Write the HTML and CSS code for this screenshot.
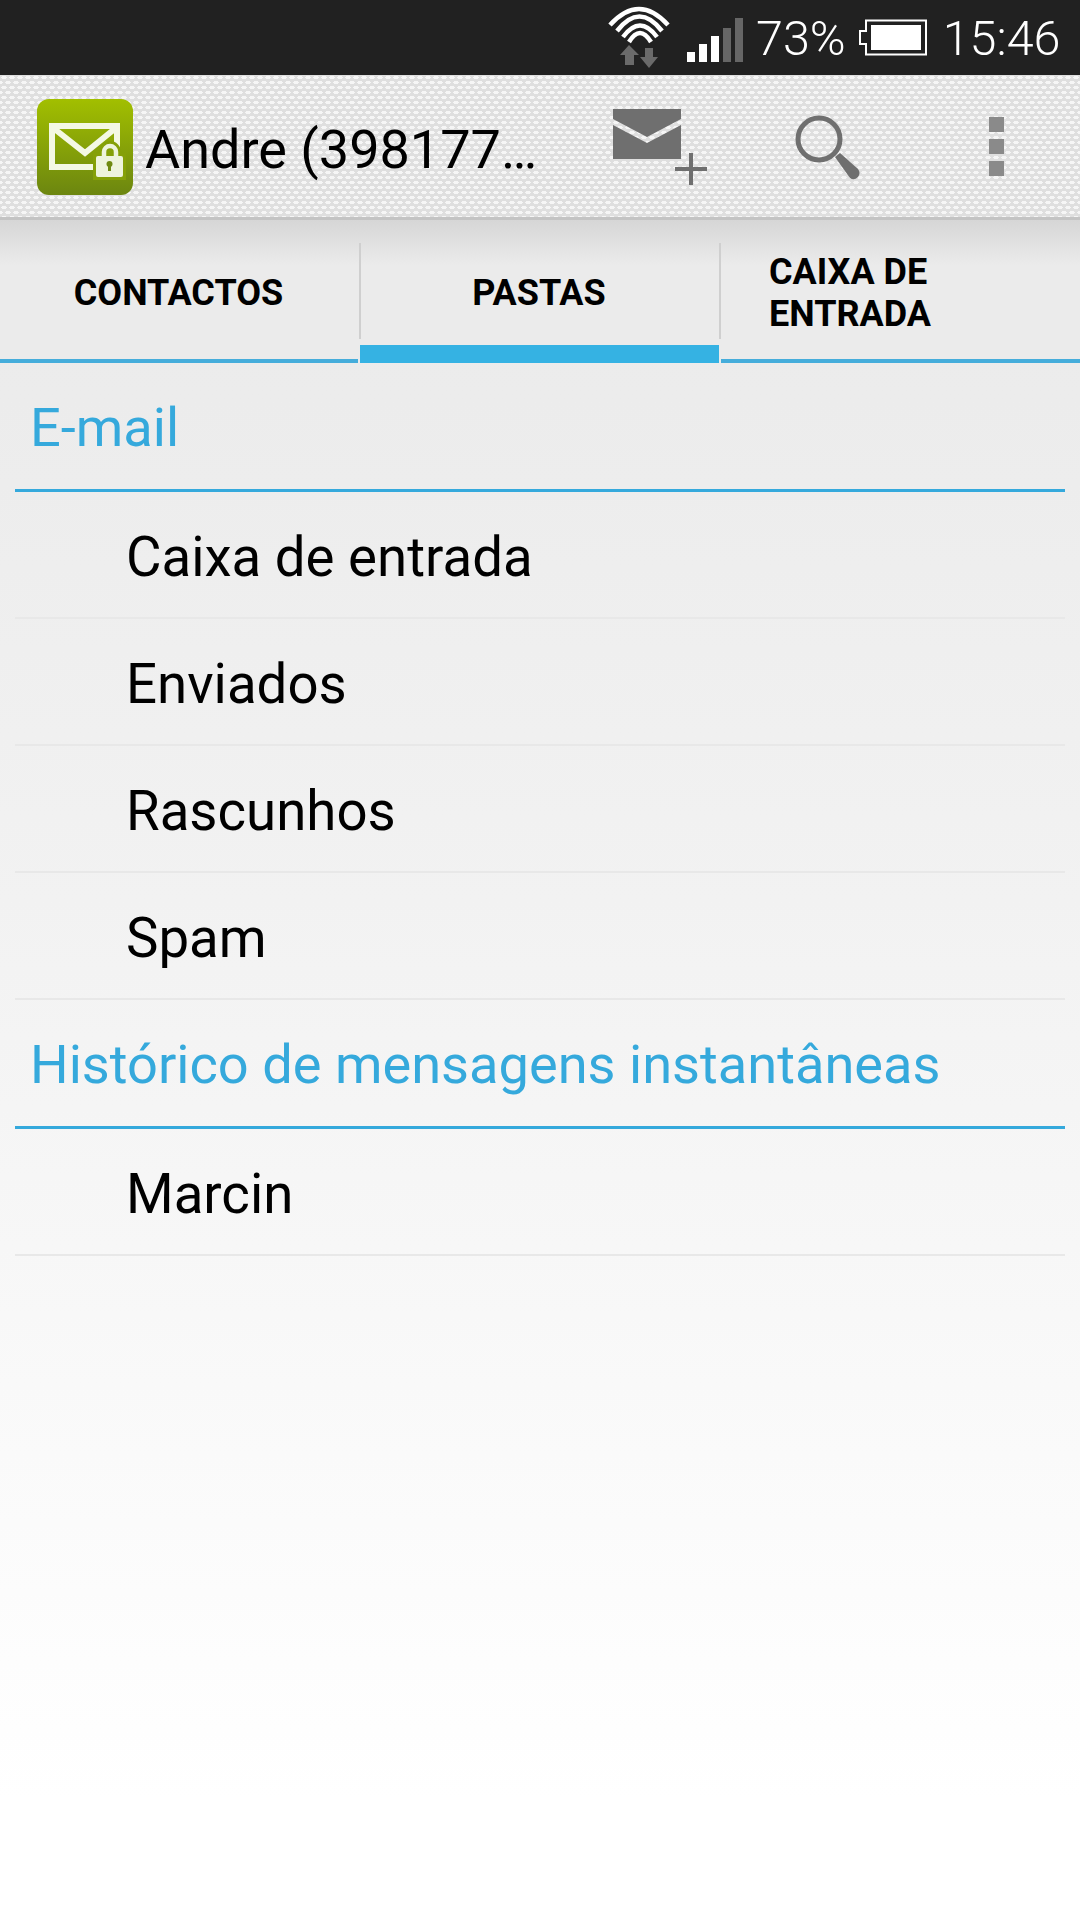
FILE: index.html
```html
<!doctype html>
<html lang="pt">
  <head>
    <meta charset="utf-8" />
    <title>Pastas</title>
    <link rel="stylesheet" href="styles.css">
  </head>
  <body>
    <div class="screen">
      <div class="statusbar">
        <svg class="st-wifi" width="70" height="72" viewBox="0 0 70 72">
          <g fill="none" stroke="#fff" stroke-width="4.5">
            <path d="M10 25 Q39 -7 68 25" />
            <path d="M17 31 Q39.5 2 62 31" />
            <path d="M23 37 Q40 14 57 37" />
            <path d="M29 42 Q40 24 51 42" />
          </g>
          <path d="M29 45 L39 55 H34 V65 H25 V55 H20 Z" fill="#6a6a6a" />
          <path d="M45 48 H53 V57 H58 L49 68 L40 57 H45 Z" fill="#6a6a6a" />
        </svg>
        <svg class="st-signal" width="56" height="44" viewBox="0 0 56 44">
          <rect x="0" y="34" width="8" height="10" fill="#fff" />
          <rect x="12" y="26" width="8" height="18" fill="#fff" />
          <rect x="24" y="18" width="8" height="26" fill="#fff" />
          <rect x="36" y="10" width="8" height="34" fill="#666" />
          <rect x="48" y="0" width="8" height="44" fill="#666" />
        </svg>
        <span class="st-text st-pct">73%</span>
        <svg class="st-battery" width="70" height="37" viewBox="0 0 70 37">
          <path d="M8 1.5 H68 V35.5 H8 V25 H2 V12 H8 Z" fill="none" stroke="#fff" stroke-width="2" />
          <rect x="13" y="6" width="50" height="25" fill="#fff" />
        </svg>
        <span class="st-text st-time">15:46</span>
      </div>

      <header class="appbar">
        <svg class="app-icon" width="96" height="96" viewBox="0 0 96 96">
          <defs>
            <linearGradient id="iconbg" x1="0" y1="0" x2="0" y2="1">
              <stop offset="0" stop-color="#a2bf00" />
              <stop offset="1" stop-color="#6c8610" />
            </linearGradient>
          </defs>
          <rect x="0" y="0" width="96" height="96" rx="12" fill="url(#iconbg)" />
          <rect x="15" y="27" width="65" height="41" fill="none" stroke="#f4f8e4" stroke-width="6" />
          <path d="M15 28 L48 54 L80 28" fill="none" stroke="#f4f8e4" stroke-width="6" />
          <path d="M67 58 V53 A5.7 5.7 0 0 1 79 53 V58" fill="none" stroke="#85a008" stroke-width="10" />
          <rect x="56" y="54" width="33" height="27" fill="#85a008" />
          <path d="M67 58 V53 A5.7 5.7 0 0 1 79 53 V58" fill="none" stroke="#eef4dc" stroke-width="4.5" />
          <rect x="59" y="57" width="27" height="21" rx="2" fill="#eef4dc" />
          <circle cx="72.5" cy="65" r="3" fill="#6f8a10" />
          <rect x="71" y="65" width="3" height="7" fill="#6f8a10" />
        </svg>
        <div class="app-title">Andre (398177…</div>
        <svg class="act-compose" width="95" height="77" viewBox="0 0 95 77">
          <path d="M0 0 H68 V10 L34 28 L0 10 Z" fill="#6f6f6f" />
          <path d="M0 16 L34 34 L68 16 V50 H0 Z" fill="#6f6f6f" />
          <path d="M62 58 H76 V44 H80 V58 H94 V62 H80 V76 H76 V62 H62 Z" fill="#6f6f6f" />
        </svg>
        <svg class="act-search" width="66" height="66" viewBox="0 0 66 66">
          <circle cx="24" cy="24" r="21" fill="none" stroke="#6f6f6f" stroke-width="5" />
          <path d="M40 42 L45 38 L63 54 Q66 58 63 62 Q59 66 55 63 Z" fill="#6f6f6f" />
        </svg>
        <div class="act-more">
          <span class="dot"></span>
          <span class="dot"></span>
          <span class="dot"></span>
        </div>
      </header>

      <nav class="tabs">
        <div class="tab first">CONTACTOS</div>
        <div class="tab active">PASTAS</div>
        <div class="tab multi">CAIXA DE<br />ENTRADA</div>
      </nav>

      <main class="list">
        <h2 class="section-title">E-mail</h2>
        <div class="row">Caixa de entrada</div>
        <div class="row">Enviados</div>
        <div class="row">Rascunhos</div>
        <div class="row">Spam</div>
        <h2 class="section-title">Histórico de mensagens instantâneas</h2>
        <div class="row">Marcin</div>
      </main>
    </div>
  </body>
</html>
```

FILE: styles.css
```css
* {
  box-sizing: border-box;
}
html,
body {
  margin: 0;
  padding: 0;
}
body {
  width: 1080px;
  height: 1920px;
  overflow: hidden;
  font-family: Roboto, sans-serif;
  color: #000;
}
.screen {
  width: 1080px;
  height: 1920px;
  display: flex;
  flex-direction: column;
  background: linear-gradient(#ebebeb 220px, #ececec 400px, #f2f2f2 900px, #fff 1800px);
}

/* status bar */
.statusbar {
  height: 75px;
  flex: none;
  background: #212121;
  display: flex;
  align-items: flex-start;
  color: #fff;
}
.st-wifi {
  margin: 0 0 0 600px;
}
.st-signal {
  margin: 18px 0 0 17px;
}
.st-text {
  font-size: 48.5px;
  line-height: 78px;
  font-weight: 300;
}
.st-pct {
  margin-left: 13px;
}
.st-battery {
  margin: 19px 0 0 12px;
}
.st-time {
  margin-left: 15px;
}

/* action bar */
.appbar {
  height: 145px;
  flex: none;
  display: flex;
  align-items: flex-start;
  background-color: #dfdfdf;
  background-image:
    radial-gradient(ellipse 3.2px 1.5px at 4px 2.5px, #f6f6f6 85%, transparent),
    radial-gradient(ellipse 3.2px 1.5px at 0 7.5px, #f6f6f6 85%, transparent),
    radial-gradient(ellipse 3.2px 1.5px at 8px 7.5px, #f6f6f6 85%, transparent);
  background-size: 8px 10px;
  border-bottom: 3px solid #c4c4c4;
}
.app-icon {
  margin: 24px 0 0 37px;
  flex: none;
}
.app-title {
  width: 395px;
  margin-left: 12px;
  padding-top: 2px;
  font-size: 54px;
  line-height: 145px;
  white-space: nowrap;
}
.act-compose {
  margin: 34px 0 0 73px;
  flex: none;
}
.act-search {
  margin: 40px 0 0 87px;
  flex: none;
}
.act-more {
  margin: 42px 0 0 128px;
  display: flex;
  flex-direction: column;
  gap: 7px;
}
.dot {
  display: block;
  width: 15px;
  height: 15px;
  background: #8a8a8a;
}

/* tabs */
.tabs {
  height: 143px;
  flex: none;
  display: flex;
  background: linear-gradient(#d6d6d6, #ebebeb 45px);
}
.tab {
  position: relative;
  width: 360px;
  display: flex;
  align-items: center;
  justify-content: center;
  font-size: 36px;
  font-weight: 700;
  line-height: 42px;
  padding-top: 3px;
}
.tab::after {
  content: "";
  position: absolute;
  left: 0;
  right: 0;
  bottom: 0;
  height: 4px;
  background: #45addb;
}
.tab + .tab::before {
  content: "";
  position: absolute;
  left: -1px;
  top: 23px;
  height: 96px;
  width: 2px;
  background: #cfcfcf;
}
.tab.first {
  padding-right: 3px;
}
.tab.first::after {
  right: 2px;
}
.tab.active {
  padding-right: 2px;
}
.tab.active::after {
  right: 1px;
  height: 18px;
  background: #35b2e3;
}
.tab.multi {
  justify-content: flex-start;
  padding-left: 49px;
}
.tab.multi::after {
  left: 1px;
}

/* list */
.list {
  flex: 1;
  padding: 0 15px;
}
.section-title {
  margin: 0;
  height: 129px;
  padding-left: 15px;
  font-size: 54.2px;
  font-weight: 400;
  line-height: 129px;
  color: #35a9dc;
  border-bottom: 3px solid #35a9dc;
}
.row {
  height: 127px;
  padding: 5px 0 0 111px;
  font-size: 54.6px;
  line-height: 121px;
  border-bottom: 2px solid #e8e8e8;
}
```
